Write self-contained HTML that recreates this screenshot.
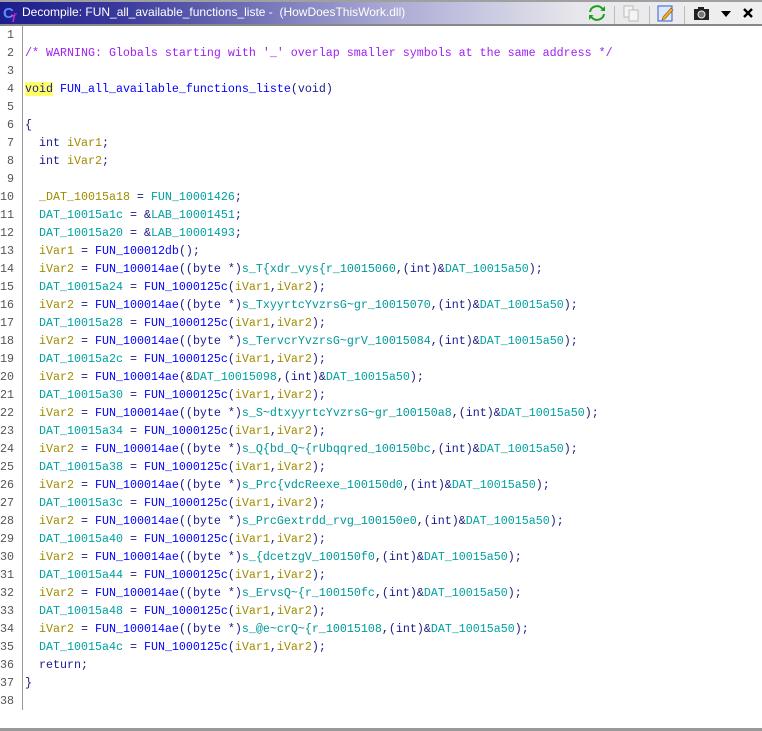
<!DOCTYPE html>
<html><head><meta charset="utf-8"><style>
*{margin:0;padding:0;box-sizing:border-box}
body{width:762px;height:731px;background:#fff;position:relative;overflow:hidden;font-family:"Liberation Sans",sans-serif}
#top{position:absolute;left:0;top:0;width:762px;height:2px;background:#a0a0a0}
#title{position:absolute;left:0;top:2px;width:762px;height:22px;background:linear-gradient(90deg,#1c1c8c 0px,#3a3a9c 120px,#a6a6d2 380px,#c4c4e0 470px,#e8e8ec 580px,#f0f0f0 762px)}
#title .t{position:absolute;left:22px;top:3px;font-size:12px;color:#fff;white-space:pre}
#tb{position:absolute;left:0;top:24px;width:762px;height:2px;background:#888}
#gut{position:absolute;left:22px;top:26px;width:1px;height:684px;background:#999}
#bot{position:absolute;left:0;top:728px;width:762px;height:3px;background:#999}
pre{position:absolute;top:26px;font-family:"Liberation Mono",monospace;font-size:11.67px;line-height:18px}
#ln{left:0;width:20px;text-align:right;color:#555;padding-right:6px}
#code{left:25px;color:#1a1a80}
.c{color:#a020f0}.k{color:#1a1a90}.f{color:#0000ff}.g{color:#00a0a0}.v{color:#a08c00}.s{color:#009898}.y{background:#ffff66}
.sep{position:absolute;top:4px;width:1px;height:18px;background:#bbb}
</style></head><body>
<div id="top"></div>
<div id="title">
<svg style="position:absolute;left:3px;top:2px" width="18" height="18"><text x="0" y="14" font-family="Liberation Sans" font-weight="bold" font-size="15" fill="#5a8cff">C</text><text x="9" y="17" font-family="Liberation Serif" font-style="italic" font-weight="bold" font-size="12" fill="#e020c0">f</text></svg>
<span class="t">Decompile: FUN_all_available_functions_liste -  (HowDoesThisWork.dll)</span>
<svg style="position:absolute;left:588px;top:2px" width="18" height="18"><path d="M3 8a6 6 0 0 1 11-2l-2 1h5V2l-2 2A8 8 0 0 0 1 8z" fill="#1aa01a"/><path d="M15 10a6 6 0 0 1-11 2l2-1H1v5l2-2a8 8 0 0 0 14-4z" fill="#1aa01a"/></svg>
<div class="sep" style="left:614px"></div>
<svg style="position:absolute;left:623px;top:3px" width="18" height="18"><rect x="1" y="1" width="9" height="11" fill="#f4f4f4" stroke="#bbb"/><rect x="6" y="5" width="9" height="11" fill="#f4f4f4" stroke="#bbb"/></svg>
<div class="sep" style="left:649px"></div>
<svg style="position:absolute;left:657px;top:3px" width="18" height="18"><rect x="1" y="1" width="14" height="15" fill="#dbe8ff" stroke="#3060c0"/><path d="M6 12l8-9 2 2-8 9-3 1z" fill="#f0b030" stroke="#a06000" stroke-width=".7"/></svg>
<div class="sep" style="left:684px"></div>
<svg style="position:absolute;left:693px;top:3px" width="18" height="18"><rect x="1" y="4" width="15" height="11" fill="#222"/><rect x="5" y="2" width="6" height="3" fill="#222"/><circle cx="8.5" cy="9.5" r="3.5" fill="#777" stroke="#eee" stroke-width="1"/></svg>
<svg style="position:absolute;left:720px;top:8px" width="12" height="8"><path d="M1 1h10L6 7z" fill="#000"/></svg>
<svg style="position:absolute;left:742px;top:5px" width="12" height="12"><path d="M2 2l8 8M10 2l-8 8" stroke="#000" stroke-width="2.4"/></svg>
</div>
<div id="tb"></div>
<div id="gut"></div>
<pre id="ln">1
2
3
4
5
6
7
8
9
10
11
12
13
14
15
16
17
18
19
20
21
22
23
24
25
26
27
28
29
30
31
32
33
34
35
36
37
38</pre>
<pre id="code">

<span class="c">/* WARNING: Globals starting with '_' overlap smaller symbols at the same address */</span>

<span class="k y">void</span> <span class="f">FUN_all_available_functions_liste</span>(<span class="k">void</span>)

{
  <span class="k">int</span> <span class="v">iVar1</span>;
  <span class="k">int</span> <span class="v">iVar2</span>;

  <span class="v">_DAT_10015a18</span> = <span class="g">FUN_10001426</span>;
  <span class="g">DAT_10015a1c</span> = &amp;<span class="g">LAB_10001451</span>;
  <span class="g">DAT_10015a20</span> = &amp;<span class="g">LAB_10001493</span>;
  <span class="v">iVar1</span> = <span class="f">FUN_100012db</span>();
  <span class="v">iVar2</span> = <span class="f">FUN_100014ae</span>((<span class="k">byte</span> *)<span class="s">s_T{xdr_vys{r_10015060</span>,(<span class="k">int</span>)&amp;<span class="g">DAT_10015a50</span>);
  <span class="g">DAT_10015a24</span> = <span class="f">FUN_1000125c</span>(<span class="v">iVar1</span>,<span class="v">iVar2</span>);
  <span class="v">iVar2</span> = <span class="f">FUN_100014ae</span>((<span class="k">byte</span> *)<span class="s">s_TxyyrtcYvzrsG~gr_10015070</span>,(<span class="k">int</span>)&amp;<span class="g">DAT_10015a50</span>);
  <span class="g">DAT_10015a28</span> = <span class="f">FUN_1000125c</span>(<span class="v">iVar1</span>,<span class="v">iVar2</span>);
  <span class="v">iVar2</span> = <span class="f">FUN_100014ae</span>((<span class="k">byte</span> *)<span class="s">s_TervcrYvzrsG~grV_10015084</span>,(<span class="k">int</span>)&amp;<span class="g">DAT_10015a50</span>);
  <span class="g">DAT_10015a2c</span> = <span class="f">FUN_1000125c</span>(<span class="v">iVar1</span>,<span class="v">iVar2</span>);
  <span class="v">iVar2</span> = <span class="f">FUN_100014ae</span>(&amp;<span class="g">DAT_10015098</span>,(<span class="k">int</span>)&amp;<span class="g">DAT_10015a50</span>);
  <span class="g">DAT_10015a30</span> = <span class="f">FUN_1000125c</span>(<span class="v">iVar1</span>,<span class="v">iVar2</span>);
  <span class="v">iVar2</span> = <span class="f">FUN_100014ae</span>((<span class="k">byte</span> *)<span class="s">s_S~dtxyyrtcYvzrsG~gr_100150a8</span>,(<span class="k">int</span>)&amp;<span class="g">DAT_10015a50</span>);
  <span class="g">DAT_10015a34</span> = <span class="f">FUN_1000125c</span>(<span class="v">iVar1</span>,<span class="v">iVar2</span>);
  <span class="v">iVar2</span> = <span class="f">FUN_100014ae</span>((<span class="k">byte</span> *)<span class="s">s_Q{bd_Q~{rUbqqred_100150bc</span>,(<span class="k">int</span>)&amp;<span class="g">DAT_10015a50</span>);
  <span class="g">DAT_10015a38</span> = <span class="f">FUN_1000125c</span>(<span class="v">iVar1</span>,<span class="v">iVar2</span>);
  <span class="v">iVar2</span> = <span class="f">FUN_100014ae</span>((<span class="k">byte</span> *)<span class="s">s_Prc{vdcReexe_100150d0</span>,(<span class="k">int</span>)&amp;<span class="g">DAT_10015a50</span>);
  <span class="g">DAT_10015a3c</span> = <span class="f">FUN_1000125c</span>(<span class="v">iVar1</span>,<span class="v">iVar2</span>);
  <span class="v">iVar2</span> = <span class="f">FUN_100014ae</span>((<span class="k">byte</span> *)<span class="s">s_PrcGextrdd_rvg_100150e0</span>,(<span class="k">int</span>)&amp;<span class="g">DAT_10015a50</span>);
  <span class="g">DAT_10015a40</span> = <span class="f">FUN_1000125c</span>(<span class="v">iVar1</span>,<span class="v">iVar2</span>);
  <span class="v">iVar2</span> = <span class="f">FUN_100014ae</span>((<span class="k">byte</span> *)<span class="s">s_{dcetzgV_100150f0</span>,(<span class="k">int</span>)&amp;<span class="g">DAT_10015a50</span>);
  <span class="g">DAT_10015a44</span> = <span class="f">FUN_1000125c</span>(<span class="v">iVar1</span>,<span class="v">iVar2</span>);
  <span class="v">iVar2</span> = <span class="f">FUN_100014ae</span>((<span class="k">byte</span> *)<span class="s">s_ErvsQ~{r_100150fc</span>,(<span class="k">int</span>)&amp;<span class="g">DAT_10015a50</span>);
  <span class="g">DAT_10015a48</span> = <span class="f">FUN_1000125c</span>(<span class="v">iVar1</span>,<span class="v">iVar2</span>);
  <span class="v">iVar2</span> = <span class="f">FUN_100014ae</span>((<span class="k">byte</span> *)<span class="s">s_@e~crQ~{r_10015108</span>,(<span class="k">int</span>)&amp;<span class="g">DAT_10015a50</span>);
  <span class="g">DAT_10015a4c</span> = <span class="f">FUN_1000125c</span>(<span class="v">iVar1</span>,<span class="v">iVar2</span>);
  <span class="k">return</span>;
}
</pre>
<div id="bot"></div>
</body></html>
